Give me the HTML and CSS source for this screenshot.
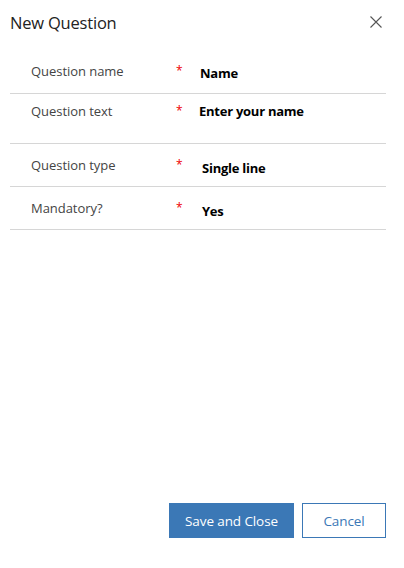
FILE: index.html
```html
<!DOCTYPE html>
<html>
<head>
<meta charset="utf-8">
<link rel="stylesheet" href="styles.css">
</head>
<body>
<div class="dialog">
  <div class="header">
    <h1 class="title">New Question</h1>
    <button class="close" aria-label="Close">
      <svg width="12" height="12" viewBox="0 0 12 12"><path d="M0.5 0.5 L11.5 11.5 M11.5 0.5 L0.5 11.5" stroke="#555" stroke-width="1.1" fill="none"/></svg>
    </button>
  </div>
  <div class="form">
    <div class="row r1">
      <div class="label">Question name</div>
      <div class="req">*</div>
      <div class="value">Name</div>
    </div>
    <div class="row r2">
      <div class="label">Question text</div>
      <div class="req">*</div>
      <div class="value v2">Enter your name</div>
    </div>
    <div class="row r3">
      <div class="label">Question type</div>
      <div class="req">*</div>
      <div class="value v3">Single line</div>
    </div>
    <div class="row r4">
      <div class="label">Mandatory?</div>
      <div class="req">*</div>
      <div class="value v3">Yes</div>
    </div>
  </div>
  <div class="spacer"></div>
  <div class="footer">
    <button class="btn primary">Save and Close</button>
    <button class="btn secondary">Cancel</button>
  </div>
</div>
</body>
</html>
```
FILE: styles.css
```css
html, body {
  margin: 0;
  padding: 0;
  background: #fff;
}
body {
  font-family: "Open Sans", "Noto Sans", sans-serif;
  color: #000;
}
.dialog {
  width: 404px;
  height: 568px;
  display: flex;
  flex-direction: column;
  box-sizing: border-box;
}
.header {
  display: flex;
  align-items: center;
  justify-content: space-between;
  height: 44px;
  padding: 0 22px 0 10px;
}
.title {
  margin: 0;
  font-size: 16.5px;
  font-weight: 400;
  color: #222;
  letter-spacing: -0.2px;
}
.close {
  background: none;
  border: 0;
  padding: 0;
  width: 12px;
  height: 12px;
  display: flex;
}
.form {
  margin: 6px 18px 0 10px;
}
.row {
  display: flex;
  border-bottom: 1px solid #d6d6d6;
  box-sizing: border-box;
  padding-left: 21px;
  font-size: 13px;
  line-height: 18px;
}
.r1 { height: 44px; padding-top: 12px; }
.r2 { height: 50px; padding-top: 8px; }
.r3 { height: 43px; padding-top: 12px; }
.r4 { height: 43px; padding-top: 12px; }
.label {
  width: 145px;
  color: #444;
  letter-spacing: -0.05px;
}
.req {
  width: 24px;
  color: #e00;
  font-size: 12px;
  line-height: 14px;
  padding-top: 2px;
}
.value {
  font-weight: 700;
  letter-spacing: -0.25px;
  padding-top: 2px;
}
.v2 { padding-top: 0; margin-left: -1px; }
.v3 { padding-top: 3px; margin-left: 2px; }
.spacer { flex: 1; }
.footer {
  display: flex;
  justify-content: flex-end;
  gap: 8px;
  padding: 0 18px 30px 0;
}
.btn {
  height: 35px;
  font-family: "Open Sans", "Noto Sans", sans-serif;
  font-size: 13.5px;
  letter-spacing: -0.1px;
  box-sizing: border-box;
  cursor: pointer;
}
.primary {
  width: 125px;
  background: #3b78b6;
  border: 1px solid #3b78b6;
  color: #fff;
}
.secondary {
  width: 84px;
  background: #fff;
  border: 1px solid #3b78b6;
  color: #3b78b6;
}
```
